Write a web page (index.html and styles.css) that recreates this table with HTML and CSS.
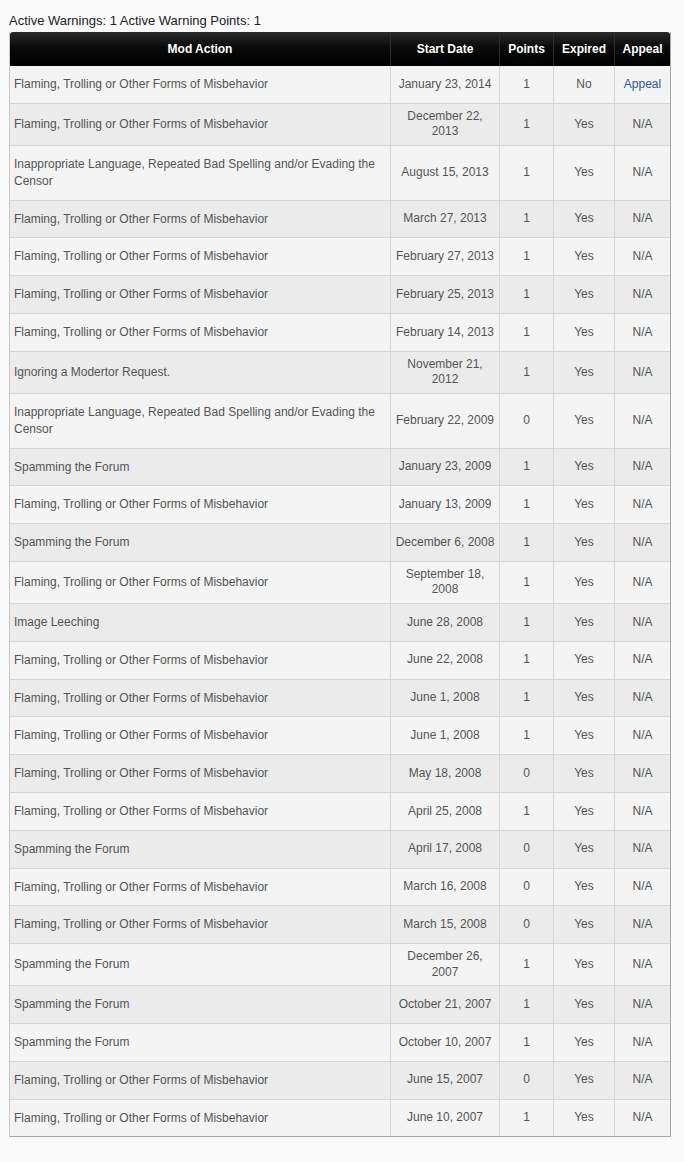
FILE: index.html
```html
<!DOCTYPE html>
<html>
<head>
<meta charset="utf-8">
<link rel="stylesheet" href="styles.css">
</head>
<body>
<div class="summary">Active Warnings: 1 Active Warning Points: 1</div>
<table class="warnings">
  <colgroup>
    <col class="c-action"><col class="c-date"><col class="c-points"><col class="c-exp"><col class="c-appeal">
  </colgroup>
  <thead>
    <tr><th>Mod Action</th><th>Start Date</th><th>Points</th><th>Expired</th><th>Appeal</th></tr>
  </thead>
  <tbody>
    <tr><td class="action">Flaming, Trolling or Other Forms of Misbehavior</td><td class="date">January 23, 2014</td><td>1</td><td>No</td><td><a href="#" class="appeal">Appeal</a></td></tr>
    <tr><td class="action">Flaming, Trolling or Other Forms of Misbehavior</td><td class="date">December 22, 2013</td><td>1</td><td>Yes</td><td>N/A</td></tr>
    <tr><td class="action">Inappropriate Language, Repeated Bad Spelling and/or Evading the Censor</td><td class="date">August 15, 2013</td><td>1</td><td>Yes</td><td>N/A</td></tr>
    <tr><td class="action">Flaming, Trolling or Other Forms of Misbehavior</td><td class="date">March 27, 2013</td><td>1</td><td>Yes</td><td>N/A</td></tr>
    <tr><td class="action">Flaming, Trolling or Other Forms of Misbehavior</td><td class="date">February 27, 2013</td><td>1</td><td>Yes</td><td>N/A</td></tr>
    <tr><td class="action">Flaming, Trolling or Other Forms of Misbehavior</td><td class="date">February 25, 2013</td><td>1</td><td>Yes</td><td>N/A</td></tr>
    <tr><td class="action">Flaming, Trolling or Other Forms of Misbehavior</td><td class="date">February 14, 2013</td><td>1</td><td>Yes</td><td>N/A</td></tr>
    <tr><td class="action">Ignoring a Modertor Request.</td><td class="date">November 21, 2012</td><td>1</td><td>Yes</td><td>N/A</td></tr>
    <tr><td class="action">Inappropriate Language, Repeated Bad Spelling and/or Evading the Censor</td><td class="date">February 22, 2009</td><td>0</td><td>Yes</td><td>N/A</td></tr>
    <tr><td class="action">Spamming the Forum</td><td class="date">January 23, 2009</td><td>1</td><td>Yes</td><td>N/A</td></tr>
    <tr><td class="action">Flaming, Trolling or Other Forms of Misbehavior</td><td class="date">January 13, 2009</td><td>1</td><td>Yes</td><td>N/A</td></tr>
    <tr><td class="action">Spamming the Forum</td><td class="date">December 6, 2008</td><td>1</td><td>Yes</td><td>N/A</td></tr>
    <tr><td class="action">Flaming, Trolling or Other Forms of Misbehavior</td><td class="date">September 18, 2008</td><td>1</td><td>Yes</td><td>N/A</td></tr>
    <tr><td class="action">Image Leeching</td><td class="date">June 28, 2008</td><td>1</td><td>Yes</td><td>N/A</td></tr>
    <tr><td class="action">Flaming, Trolling or Other Forms of Misbehavior</td><td class="date">June 22, 2008</td><td>1</td><td>Yes</td><td>N/A</td></tr>
    <tr><td class="action">Flaming, Trolling or Other Forms of Misbehavior</td><td class="date">June 1, 2008</td><td>1</td><td>Yes</td><td>N/A</td></tr>
    <tr><td class="action">Flaming, Trolling or Other Forms of Misbehavior</td><td class="date">June 1, 2008</td><td>1</td><td>Yes</td><td>N/A</td></tr>
    <tr><td class="action">Flaming, Trolling or Other Forms of Misbehavior</td><td class="date">May 18, 2008</td><td>0</td><td>Yes</td><td>N/A</td></tr>
    <tr><td class="action">Flaming, Trolling or Other Forms of Misbehavior</td><td class="date">April 25, 2008</td><td>1</td><td>Yes</td><td>N/A</td></tr>
    <tr><td class="action">Spamming the Forum</td><td class="date">April 17, 2008</td><td>0</td><td>Yes</td><td>N/A</td></tr>
    <tr><td class="action">Flaming, Trolling or Other Forms of Misbehavior</td><td class="date">March 16, 2008</td><td>0</td><td>Yes</td><td>N/A</td></tr>
    <tr><td class="action">Flaming, Trolling or Other Forms of Misbehavior</td><td class="date">March 15, 2008</td><td>0</td><td>Yes</td><td>N/A</td></tr>
    <tr><td class="action">Spamming the Forum</td><td class="date">December 26, 2007</td><td>1</td><td>Yes</td><td>N/A</td></tr>
    <tr><td class="action">Spamming the Forum</td><td class="date">October 21, 2007</td><td>1</td><td>Yes</td><td>N/A</td></tr>
    <tr><td class="action">Spamming the Forum</td><td class="date">October 10, 2007</td><td>1</td><td>Yes</td><td>N/A</td></tr>
    <tr><td class="action">Flaming, Trolling or Other Forms of Misbehavior</td><td class="date">June 15, 2007</td><td>0</td><td>Yes</td><td>N/A</td></tr>
    <tr><td class="action">Flaming, Trolling or Other Forms of Misbehavior</td><td class="date">June 10, 2007</td><td>1</td><td>Yes</td><td>N/A</td></tr>
  </tbody>
</table>
</body>
</html>
```

FILE: styles.css
```css
html, body {
  margin: 0;
  padding: 0;
  background: #fafafa;
}
body {
  padding: 13px 13px 0 9px;
  font-family: "Liberation Sans", Arial, sans-serif;
  font-size: 12px;
  color: #555;
}
.summary {
  font-size: 13px;
  color: #222;
  line-height: 16px;
  margin-bottom: 3px;
}
.warnings {
  width: 662px;
  table-layout: fixed;
  border-collapse: separate;
  border-spacing: 0;
  border-left: 1px solid #c8c8c8;
  border-right: 1px solid #a8a8a8;
  border-bottom: 1px solid #a8a8a8;
}
.c-action { width: 380px; }
.c-date { width: 109px; }
.c-points { width: 54px; }
.c-exp { width: 61px; }
.c-appeal { width: 56px; }
.warnings th {
  background: linear-gradient(to bottom, #2a2a2a 0%, #0a0a0a 45%, #000 100%);
  color: #fff;
  font-weight: bold;
  font-size: 12px;
  height: 34px;
  padding: 0 4px;
  text-align: center;
  border-left: 1px solid #2e2e2e;
}
.warnings th:first-child {
  border-left: none;
  border-top-left-radius: 3px;
}
.warnings th:last-child {
  border-top-right-radius: 3px;
}
.warnings td {
  text-align: center;
  vertical-align: middle;
  line-height: 15.5px;
  padding: 5px 4px;
  border-top: 1px solid #d6d6d6;
  border-left: 1px solid #d6d6d6;
}
.warnings td.action {
  text-align: left;
  line-height: 17px;
  padding: 10px 12px 9.8px 4px;
  border-left: none;
}
.warnings tbody tr:first-child td {
  border-top: none;
}
.warnings tbody tr:nth-child(odd) td {
  background: #f4f4f4;
}
.warnings tbody tr:nth-child(even) td {
  background: #ebebeb;
}
.appeal {
  color: #1f5b95;
  text-decoration: none;
}
```
